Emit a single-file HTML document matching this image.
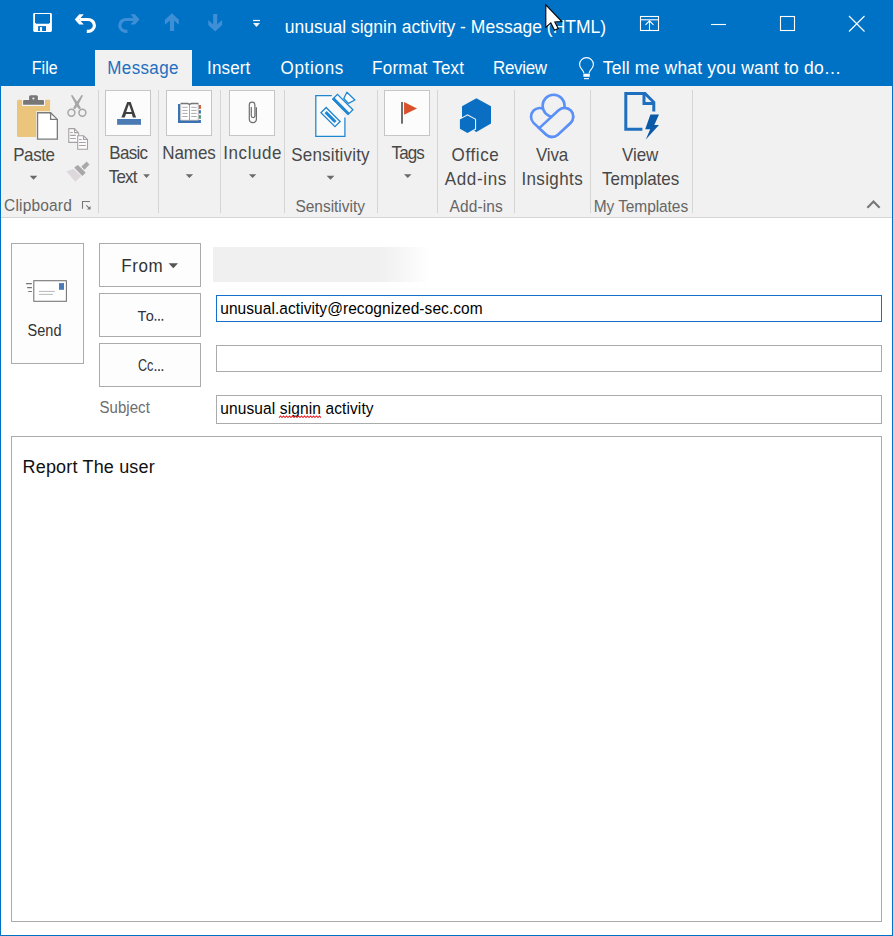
<!DOCTYPE html>
<html><head><meta charset="utf-8"><style>
html,body{margin:0;padding:0;width:893px;height:936px;overflow:hidden;background:#fff}
body{position:relative;font-family:"Liberation Sans",sans-serif}
.t{position:absolute;white-space:nowrap;line-height:1}
.r{position:absolute}
.a{position:absolute;overflow:visible}
</style></head><body>
<div class="r" style="left:0px;top:0px;width:893px;height:936px;background:#ffffff;"></div>
<div class="r" style="left:0px;top:0px;width:893px;height:86px;background:#0072c6;"></div>
<div class="r" style="left:1px;top:86px;width:891px;height:131px;background:#f1f1f1;"></div>
<div class="r" style="left:1px;top:217px;width:891px;height:1px;background:#d6d6d6;"></div>
<div class="r" style="left:0px;top:86px;width:1px;height:850px;background:#0072c6;"></div>
<div class="r" style="left:892px;top:86px;width:1px;height:850px;background:#0072c6;"></div>
<div class="r" style="left:0px;top:935px;width:893px;height:1px;background:#0072c6;"></div>
<svg class="a" style="left:0;top:0" width="893" height="86" viewBox="0 0 893 86">
<!-- save -->
<rect x="33.2" y="13" width="18.7" height="18.9" rx="1.3" fill="#fff"/>
<path d="M35 14 H50 V22.6 L48.8 23.8 H36.2 L35 22.6 Z" fill="#0072c6"/>
<rect x="38.1" y="26.1" width="7.9" height="4.9" fill="#0072c6"/>
<rect x="39.9" y="27.1" width="2.2" height="3.9" fill="#fff"/>
<!-- undo -->
<path d="M79.5 19.5 H88 A6.4 5.95 0 0 1 88 31.4 H86.8" fill="none" stroke="#fff" stroke-width="3.2"/>
<path d="M74.7 19.4 L79.3 14.2 L83.8 14.2 L79.2 19.4 L83.8 24.6 L79.3 24.6 Z" fill="#fff"/>
<!-- redo (faded) -->
<g opacity="1">
<g transform="translate(214.2 0) scale(-1 1)">
<path d="M79.5 19.5 H88 A6.4 5.95 0 0 1 88 31.4 H86.8" fill="none" stroke="#3f8fd7" stroke-width="3.2"/>
<path d="M74.7 19.4 L79.3 14.2 L83.8 14.2 L79.2 19.4 L83.8 24.6 L79.3 24.6 Z" fill="#3f8fd7"/>
</g>
<!-- up -->
<path d="M171.9 13.3 L178.8 19.8 L178.8 24.8 L174.1 20.4 L174.1 30.9 L170 30.9 L170 20.4 L164.9 24.8 L164.9 19.8 Z" fill="#3f8fd7"/>
<!-- down -->
<path d="M215.2 31.5 L222.1 25 L222.1 20 L217.2 24.4 L217.2 14.1 L213.2 14.1 L213.2 24.4 L208.3 20 L208.3 25 Z" fill="#3f8fd7"/>
</g>
<!-- qat dropdown -->
<rect x="253" y="19.9" width="7" height="1.25" fill="#f4f4f4"/>
<path d="M253 23 L260 23 L256.5 27.1 Z" fill="#f4f4f4"/>
<!-- ribbon display options -->
<rect x="640.5" y="16.5" width="18" height="14" fill="none" stroke="#fff" stroke-width="1.1"/>
<line x1="640.5" y1="19.8" x2="658.5" y2="19.8" stroke="#fff" stroke-width="1.1"/>
<line x1="649.5" y1="20.5" x2="649.5" y2="30.5" stroke="#fff" stroke-width="1.1"/>
<path d="M645.5 24.8 L649.5 20.8 L653.5 24.8" fill="none" stroke="#fff" stroke-width="1.1"/>
<!-- minimize -->
<line x1="711" y1="24.5" x2="726" y2="24.5" stroke="#fff" stroke-width="1.1"/>
<!-- maximize -->
<rect x="780.5" y="16.5" width="14" height="14" fill="none" stroke="#fff" stroke-width="1.1"/>
<!-- close -->
<path d="M849 16 L864.5 31.5 M864.5 16 L849 31.5" stroke="#fff" stroke-width="1.1"/>
</svg>
<div class="t" style="left:284.66px;top:19.38px;font-size:17.5px;color:#ffffff;letter-spacing:0.015px;">unusual signin activity - Message (HTML)</div>
<div class="r" style="left:95px;top:50px;width:97px;height:37px;background:#f1f1f1;"></div>
<div class="t" style="left:31.84px;top:59.95px;font-size:16px;color:#ffffff;letter-spacing:-0.007px;transform:scale(1.0,1.09);transform-origin:0 2.08px;">File</div>
<div class="t" style="left:107.30px;top:59.21px;font-size:17px;color:#1e6fc0;letter-spacing:0.357px;transform:scale(1.0,1.09);transform-origin:0 2.21px;">Message</div>
<div class="t" style="left:207.02px;top:59.11px;font-size:17px;color:#ffffff;letter-spacing:0.160px;transform:scale(1.0,1.09);transform-origin:0 2.21px;">Insert</div>
<div class="t" style="left:280.46px;top:59.11px;font-size:17px;color:#ffffff;letter-spacing:0.710px;transform:scale(1.0,1.09);transform-origin:0 2.21px;">Options</div>
<div class="t" style="left:372.12px;top:59.11px;font-size:17px;color:#ffffff;letter-spacing:0.252px;transform:scale(1.0,1.09);transform-origin:0 2.21px;">Format Text</div>
<div class="t" style="left:493.12px;top:59.11px;font-size:17px;color:#ffffff;letter-spacing:-0.368px;transform:scale(1.0,1.09);transform-origin:0 2.21px;">Review</div>
<svg class="a" style="left:570px;top:50px" width="30" height="32" viewBox="570 50 30 32">
<path d="M583.9 73.2 C583.9 70.2 579.6 68.6 579.6 64.5 A6.9 6.9 0 0 1 593.4 64.5 C593.4 68.6 589.1 70.2 589.1 73.2" fill="none" stroke="#fff" stroke-width="1.15"/>
<rect x="583.4" y="73.7" width="6.4" height="3.1" fill="#fff"/>
<rect x="584" y="78.1" width="5" height="1.1" fill="#fff"/>
</svg>
<div class="t" style="left:602.82px;top:58.68px;font-size:17.5px;color:#ffffff;letter-spacing:0.187px;transform:scale(1.0,1.09);transform-origin:0 2.27px;">Tell me what you want to do…</div>
<div class="r" style="left:98px;top:90px;width:1px;height:123px;background:#d5d5d5;"></div>
<div class="r" style="left:158px;top:90px;width:1px;height:123px;background:#d5d5d5;"></div>
<div class="r" style="left:220px;top:90px;width:1px;height:123px;background:#d5d5d5;"></div>
<div class="r" style="left:284px;top:90px;width:1px;height:123px;background:#d5d5d5;"></div>
<div class="r" style="left:377px;top:90px;width:1px;height:123px;background:#d5d5d5;"></div>
<div class="r" style="left:437px;top:90px;width:1px;height:123px;background:#d5d5d5;"></div>
<div class="r" style="left:514px;top:90px;width:1px;height:123px;background:#d5d5d5;"></div>
<div class="r" style="left:590px;top:90px;width:1px;height:123px;background:#d5d5d5;"></div>
<div class="r" style="left:692px;top:90px;width:1px;height:123px;background:#d5d5d5;"></div>
<div class="r" style="left:105px;top:90px;width:46px;height:46px;background:#fcfcfc;box-sizing:border-box;border:1px solid #c6c6c6;"></div>
<div class="r" style="left:166px;top:90px;width:46px;height:46px;background:#fcfcfc;box-sizing:border-box;border:1px solid #c6c6c6;"></div>
<div class="r" style="left:229px;top:90px;width:46px;height:46px;background:#fcfcfc;box-sizing:border-box;border:1px solid #c6c6c6;"></div>
<div class="r" style="left:384px;top:90px;width:46px;height:46px;background:#fcfcfc;box-sizing:border-box;border:1px solid #c6c6c6;"></div>
<div class="t" style="left:13.20px;top:146.41px;font-size:17px;color:#484848;letter-spacing:-0.415px;transform:scale(1.0,1.07);transform-origin:0 2.21px;">Paste</div>
<div class="t" style="left:109.28px;top:144.11px;font-size:17px;color:#484848;letter-spacing:-0.685px;transform:scale(1.0,1.07);transform-origin:0 2.21px;">Basic</div>
<div class="t" style="left:108.82px;top:168.31px;font-size:17px;color:#484848;letter-spacing:-0.847px;transform:scale(1.0,1.07);transform-origin:0 2.21px;">Text</div>
<div class="t" style="left:162.28px;top:144.11px;font-size:17px;color:#484848;letter-spacing:-0.070px;transform:scale(1.0,1.07);transform-origin:0 2.21px;">Names</div>
<div class="t" style="left:223.30px;top:144.11px;font-size:17px;color:#484848;letter-spacing:0.553px;transform:scale(1.0,1.07);transform-origin:0 2.21px;">Include</div>
<div class="t" style="left:291.28px;top:146.41px;font-size:17px;color:#484848;letter-spacing:0.180px;transform:scale(1.0,1.07);transform-origin:0 2.21px;">Sensitivity</div>
<div class="t" style="left:391.54px;top:144.11px;font-size:17px;color:#484848;letter-spacing:-0.880px;transform:scale(1.0,1.07);transform-origin:0 2.21px;">Tags</div>
<div class="t" style="left:451.56px;top:146.21px;font-size:17px;color:#484848;letter-spacing:0.616px;transform:scale(1.0,1.07);transform-origin:0 2.21px;">Office</div>
<div class="t" style="left:444.72px;top:170.11px;font-size:17px;color:#484848;letter-spacing:0.667px;transform:scale(1.0,1.07);transform-origin:0 2.21px;">Add-ins</div>
<div class="t" style="left:536.00px;top:146.21px;font-size:17px;color:#484848;letter-spacing:-0.180px;transform:scale(1.0,1.07);transform-origin:0 2.21px;">Viva</div>
<div class="t" style="left:521.38px;top:170.11px;font-size:17px;color:#484848;letter-spacing:0.386px;transform:scale(1.0,1.07);transform-origin:0 2.21px;">Insights</div>
<div class="t" style="left:622.00px;top:146.21px;font-size:17px;color:#484848;letter-spacing:-0.060px;transform:scale(1.0,1.07);transform-origin:0 2.21px;">View</div>
<div class="t" style="left:602.08px;top:170.11px;font-size:17px;color:#484848;letter-spacing:-0.043px;transform:scale(1.0,1.07);transform-origin:0 2.21px;">Templates</div>
<div class="t" style="left:4.10px;top:197.38px;font-size:15.5px;color:#666666;letter-spacing:0.170px;transform:scale(1.0,1.07);transform-origin:0 2.02px;">Clipboard</div>
<div class="t" style="left:295.46px;top:197.58px;font-size:15.5px;color:#666666;letter-spacing:-0.028px;transform:scale(1.0,1.07);transform-origin:0 2.02px;">Sensitivity</div>
<div class="t" style="left:449.54px;top:197.58px;font-size:15.5px;color:#666666;letter-spacing:0.090px;transform:scale(1.0,1.07);transform-origin:0 2.02px;">Add-ins</div>
<div class="t" style="left:593.74px;top:197.58px;font-size:15.5px;color:#666666;letter-spacing:-0.085px;transform:scale(1.0,1.07);transform-origin:0 2.02px;">My Templates</div>
<svg class="a" style="left:0;top:0" width="893" height="936" viewBox="0 0 893 936">
<!-- paste -->
<path d="M18.5 99.8 H50.1 V135.5 A1.5 1.5 0 0 1 48.6 137 H18.5 A1.5 1.5 0 0 1 17 135.5 V101.3 A1.5 1.5 0 0 1 18.5 99.8 Z" fill="#ebc57c"/>
<rect x="22.1" y="99" width="22.9" height="7" fill="#f4f4f4"/>
<path d="M30.6 95.2 H36.4 A1.5 1.5 0 0 1 37.9 96.7 V100.1 H43 A1 1 0 0 1 44 101.1 V104.8 H23.1 V101.1 A1 1 0 0 1 24.1 100.1 H29.1 V96.7 A1.5 1.5 0 0 1 30.6 95.2 Z" fill="#777"/>
<circle cx="33.4" cy="98.5" r="1.1" fill="#f0f0f0"/>
<path d="M36 140.7 V111.2 H50.8 V112 H36.8 V140.7 Z" fill="#f6f6f6"/>
<path d="M37.55 112.75 H50.6 L57.35 119.4 V139.15 H37.55 Z" fill="#fff" stroke="#7a7a7a" stroke-width="1.3"/>
<path d="M50.6 112.75 V119.4 H57.35" fill="none" stroke="#7a7a7a" stroke-width="1.3"/>
<!-- scissors -->
<path d="M70.9 95.4 L72.4 95.0 L78.3 103.6 L81.0 108.2 L78.9 109.3 L75.6 104.6 Z" fill="#a6a6a6"/>
<path d="M83.1 95.4 L81.6 95.0 L75.7 103.6 L73.0 108.2 L75.1 109.3 L78.4 104.6 Z" fill="#a6a6a6"/>
<g stroke="#a6a6a6" fill="none">
<circle cx="71.4" cy="112.7" r="3.45" stroke-width="1.5"/>
<circle cx="82.4" cy="112.7" r="3.45" stroke-width="1.5"/>
</g>
<!-- copy -->
<g stroke="#a3a3a3" stroke-width="1.1" fill="#fdf9fd">
<path d="M68.8 128.6 H74.5 L78.6 133.2 V142.4 H68.8 Z"/>
<path d="M74.5 128.6 V132.6 H78.3" fill="none"/>
<path d="M70.2 132.5 H72.8 M70.2 135.4 H75.8 M70.2 138.5 H75.8" fill="none"/>
<path d="M77.7 135.8 H83.5 L87.5 139.6 V149.2 H77.7 Z"/>
<path d="M83.5 135.8 V139.5 H87.3" fill="none"/>
<path d="M79.1 139.5 H81.7 M79.1 142.5 H85.8 M79.1 145.5 H85.8" fill="none"/>
</g>
<!-- format painter -->
<path d="M66.3 171.2 L73.5 169.1 L81.4 175.9 L75.4 181.8 Z" fill="#dcd8dc"/>
<path d="M75.1 167.5 L77.8 165.8 L84.9 172.6 L82.4 175.2 Z" fill="#a9a7a9" stroke="#a9a7a9" stroke-width="1.2" stroke-linejoin="round"/>
<path d="M81.9 166.6 L86.7 162.1 L88.9 164.6 L84.4 169.3 Z" fill="#a9a7a9" stroke="#a9a7a9" stroke-width="1" stroke-linejoin="round"/>
<!-- launcher -->
<path d="M82.5 208.8 V201.5 H89.9" fill="none" stroke="#777" stroke-width="1.1"/>
<path d="M86.3 205.4 L89.5 208.4" stroke="#777" stroke-width="1.1"/>
<path d="M87 209.5 H90.6 V205.9 Z" fill="#777"/>
<!-- basic text A -->
<path fill-rule="evenodd" d="M121.4 117.6 L127.2 102 L130.7 102 L136.1 117.6 L132.8 117.6 L131.9 114 L126 114 L124.7 117.6 Z M126.2 111.9 L131.6 111.9 L128.9 104.3 Z" fill="#404040"/>
<rect x="117.1" y="119" width="23.9" height="5.8" fill="#4a7bb5"/>
<!-- names book -->
<path d="M178 104.1 H180 V120.1 H200.9 V122.9 H178 Z" fill="#3a72b5"/>
<rect x="198.8" y="105" width="2.1" height="3.9" fill="#d9522b"/>
<rect x="198.8" y="110.2" width="2.1" height="3.4" fill="#3a72b5"/>
<rect x="198.8" y="115.1" width="2.1" height="3.7" fill="#4a9a7a"/>
<path d="M180.7 103.6 H187.5 Q189.5 103.8 189.5 105 Q189.5 103.8 191.5 103.6 H198.3 V120.3 H180.7 Z" fill="#fff" stroke="#a5a5a5" stroke-width="0.8"/>
<path d="M180.7 103.6 H187.5 Q189.5 103.8 189.5 105 Q189.5 103.8 191.5 103.6 H198.3" fill="none" stroke="#777" stroke-width="1.5"/>
<path d="M189.5 105 V120.3" stroke="#9a9a9a" stroke-width="0.9"/>
<path d="M182.3 107.3 H187.6 M182.3 110.4 H187.6 M182.3 113.4 H187.6 M182.3 116.5 H187.6 M191.2 107.3 H196.7 M191.2 110.4 H196.7 M191.2 113.4 H196.7 M191.2 116.5 H196.7" stroke="#9c9c9c" stroke-width="0.85"/>
<!-- paperclip -->
<path d="M256.4 107.3 V119.1 A3.55 3.55 0 0 1 249.3 119.1 V105 A2.8 2.8 0 0 1 254.9 105 V115.8 A1.8 1.8 0 0 1 251.3 115.8 V107" fill="none" stroke="#6e6e6e" stroke-width="1.2"/>
<!-- sensitivity -->
<path d="M331.8 95.7 H315.8 V136.4 H344.9 V117.6" fill="#fafafa" stroke="#1f86d2" stroke-width="1.25"/>
<g transform="translate(330.55 117.1) rotate(45)">
<rect x="-9.9" y="-3.65" width="19.8" height="7.3" fill="#fafafa" stroke="#1f86d2" stroke-width="1.3"/>
<rect x="-7" y="-1.5" width="14" height="3" fill="#1f86d2"/>
</g>
<path d="M343.8 98.5 L346.9 92.3 L354.9 100 L348.4 103.4 Z" fill="#fafafa" stroke="#1f86d2" stroke-width="1.3" stroke-linejoin="round"/>
<g transform="translate(342.85 104.35) rotate(45)">
<rect x="-10.9" y="-3.3" width="21.8" height="6.6" fill="#fafafa" stroke="#1f86d2" stroke-width="1.3"/>
<rect x="-10.9" y="1.2" width="21.8" height="2.9" fill="#1f86d2"/>
</g>
<!-- flag -->
<rect x="401.1" y="102" width="1.8" height="21.7" fill="#606060"/>
<path d="M404.05 102 L417 108.5 L404.05 114.8 Z" fill="#d9502c"/>
<!-- office add-ins -->
<path d="M476.4 98.2 L491 106.2 L491 123.6 L476.4 131.9 L462 123.6 L462 106.2 Z" fill="#0a6fc2"/>
<path d="M467.5 114.2 L476.1 119 L476.1 129.5 L467.5 134.2 L458.8 129.5 L458.8 119 Z" fill="#f1f1f1"/>
<path d="M467.5 115.4 L475 119.6 L475 128.8 L467.5 133 L459.9 128.8 L459.9 119.6 Z" fill="#0a6fc2"/>
<!-- viva -->
<g fill="none" stroke="#5b90f6" stroke-width="2.6">
<path d="M545.44 110.15 A8.7 8.7 0 0 0 533.56 122.85 L546.06 134.55 A8.7 8.7 0 0 0 557.92 134.58 L570.42 122.98 A8.7 8.7 0 0 0 558.58 110.22"/>
<circle cx="553.6" cy="105.8" r="11" fill="#f1f1f1"/>
<path d="M539.24 128.16 L546.06 134.55 A8.7 8.7 0 0 0 557.92 134.58 L570.42 122.98 A8.7 8.7 0 0 0 558.58 110.22 Z" fill="#f1f1f1"/>
</g>
<!-- view templates -->
<path d="M642.4 129.3 H625.8 V93.5 H645 L653.8 102.3 V111.4" fill="none" stroke="#1f6fbf" stroke-width="3"/>
<path d="M644 94 V103.6 H653" fill="none" stroke="#1f6fbf" stroke-width="3"/>
<path d="M650.4 114.5 L659 114.5 L654.3 124.9 L659 124.9 L645.8 139.4 L650.2 129.3 L645.2 129.3 Z" fill="#0a5aa8"/>
<!-- collapse chevron -->
<path d="M867.4 207.8 L873.5 201.6 L879.6 207.8" fill="none" stroke="#777" stroke-width="2.2"/>
<!-- ribbon dropdown arrows -->
<path d="M29.7 175.8 H37.3 L33.5 179.8 Z" fill="#6a6a6a"/>
<path d="M143.2 174.2 H149.9 L146.55 178 Z" fill="#6a6a6a"/>
<path d="M185.7 174.2 H193.1 L189.4 178 Z" fill="#6a6a6a"/>
<path d="M248.9 174.2 H256.3 L252.6 178 Z" fill="#6a6a6a"/>
<path d="M326.6 175.8 H334.4 L330.5 179.8 Z" fill="#6a6a6a"/>
<path d="M404 174.2 H411.5 L407.75 178 Z" fill="#6a6a6a"/>
</svg>

<div class="r" style="left:11px;top:243px;width:73px;height:121px;background:#fdfdfd;box-sizing:border-box;border:1px solid #ababab;"></div>
<div class="r" style="left:99px;top:243px;width:102px;height:44px;background:#fdfdfd;box-sizing:border-box;border:1px solid #ababab;"></div>
<div class="r" style="left:99px;top:293px;width:102px;height:44px;background:#fdfdfd;box-sizing:border-box;border:1px solid #ababab;"></div>
<div class="r" style="left:99px;top:343px;width:102px;height:44px;background:#fdfdfd;box-sizing:border-box;border:1px solid #ababab;"></div>
<div class="t" style="left:27.46px;top:322.62px;font-size:14.5px;color:#333333;letter-spacing:0.087px;transform:scale(1.0,1.09);transform-origin:0 1.89px;">Send</div>
<div class="t" style="left:121.28px;top:257.01px;font-size:17px;color:#333333;letter-spacing:0.600px;transform:scale(1.0,1.07);transform-origin:0 2.21px;">From</div>
<div class="t" style="left:137.50px;top:308.42px;font-size:14.5px;color:#333333;letter-spacing:1.000px;transform:scale(1.0,1.05);transform-origin:0 1.89px;">To</div>
<div class="t" style="left:137.70px;top:357.82px;font-size:14.5px;color:#333333;letter-spacing:0.000px;transform:scale(0.87,1.09);transform-origin:0 1.89px;">Cc</div>
<div class="t" style="left:99.46px;top:398.80px;font-size:15px;color:#6d6d6d;letter-spacing:0.057px;transform:scale(1.0,1.07);transform-origin:0 1.95px;">Subject</div>
<div class="r" style="left:213px;top:247px;width:215px;height:35px;background:linear-gradient(to right,#f0f0f0 0%,#f0f0f0 78%,#fefefe 100%)"></div>
<div class="r" style="left:216px;top:295px;width:666px;height:27px;background:#ffffff;box-sizing:border-box;border:1px solid #1570cc;"></div>
<div class="r" style="left:216px;top:345px;width:666px;height:27px;background:#ffffff;box-sizing:border-box;border:1px solid #ababab;"></div>
<div class="r" style="left:216px;top:395px;width:666px;height:29px;background:#ffffff;box-sizing:border-box;border:1px solid #ababab;"></div>
<div class="t" style="left:220.28px;top:299.98px;font-size:15.5px;color:#000000;letter-spacing:0.058px;transform:scale(1.0,1.1);transform-origin:0 2.02px;">unusual.activity@recognized-sec.com</div>
<div class="t" style="left:220.28px;top:400.38px;font-size:15.5px;color:#000000;letter-spacing:0.115px;transform:scale(1.0,1.1);transform-origin:0 2.02px;">unusual signin activity</div>
<div class="r" style="left:11px;top:436px;width:871px;height:486px;background:#ffffff;box-sizing:border-box;border:1px solid #ababab;"></div>
<div class="t" style="left:22.56px;top:458.46px;font-size:18px;color:#111111;letter-spacing:0.174px;">Report The user</div>
<svg class="a" style="left:0;top:0" width="893" height="936" viewBox="0 0 893 936">
<!-- envelope -->
<rect x="33.8" y="280.7" width="32.6" height="20.6" fill="#fff" stroke="#777" stroke-width="1.1"/>
<rect x="59" y="283.1" width="5" height="6.7" fill="#4a7bb5"/>
<path d="M38.9 291.4 H54.9 M38.9 294.4 H52.9" stroke="#b0b0b0" stroke-width="0.9"/>
<path d="M26.1 283.6 H31.9 M27.1 287.6 H31.9 M28.2 291.5 H31.9" stroke="#777" stroke-width="1.2"/>
<!-- from arrow -->
<path d="M168.6 263.2 H178 L173.3 268.3 Z" fill="#555"/>
<!-- spell squiggle -->
<path d="M279 417.6 l1.5 -1.6 l1.5 1.6 l1.5 -1.6 l1.5 1.6 l1.5 -1.6 l1.5 1.6 l1.5 -1.6 l1.5 1.6 l1.5 -1.6 l1.5 1.6 l1.5 -1.6 l1.5 1.6 l1.5 -1.6 l1.5 1.6 l1.5 -1.6 l1.5 1.6 l1.5 -1.6 l1.5 1.6 l1.5 -1.6 l1.5 1.6 l1.5 -1.6 l1.5 1.6 l1.5 -1.6 l1.5 1.6 l1.5 -1.6 l1.5 1.6 l1.5 -1.6 l1.5 1.6" fill="none" stroke="#e52222" stroke-width="1.05"/>
<g fill="#444"><rect x="154.7" y="318.9" width="1.7" height="1.8"/><rect x="158.2" y="318.9" width="1.7" height="1.8"/><rect x="161.6" y="318.9" width="1.7" height="1.8"/>
<rect x="154.7" y="369.2" width="1.7" height="1.8"/><rect x="158.2" y="369.2" width="1.7" height="1.8"/><rect x="161.6" y="369.2" width="1.7" height="1.8"/></g>
<path d="M545.8 4.8 L545.8 27.3 L550.8 22.8 L554.5 30.2 L558.2 28.6 L554.8 21.9 L561.8 21.6 Z" fill="#fff" stroke="#000" stroke-width="1.1" stroke-linejoin="miter"/>
</svg>
</body></html>
